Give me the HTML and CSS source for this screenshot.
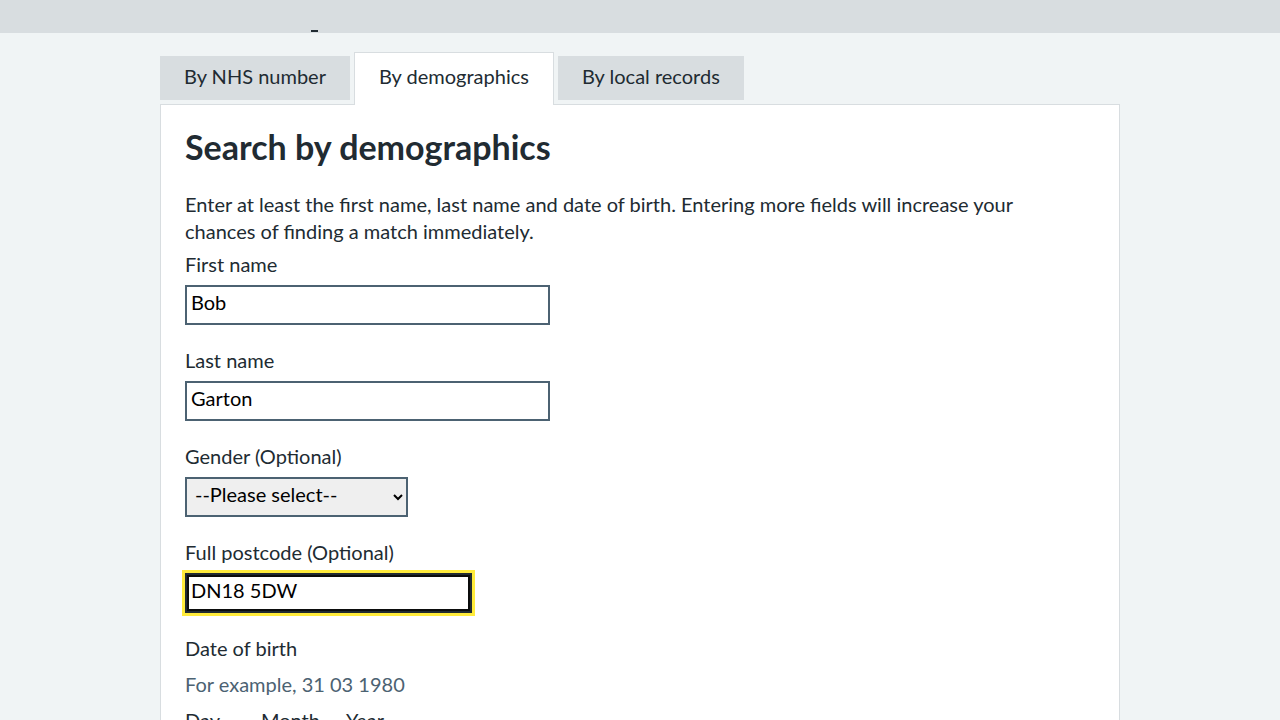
FILE: index.html
```html
<!DOCTYPE html>
<html lang="en">
<head>
<meta charset="utf-8">
<title>Search by demographics</title>
<link rel="stylesheet" href="styles.css">
</head>
<body>
<header class="topbar"></header>
<div class="page">
  <span class="descender" aria-hidden="true"></span>
  <ul class="tabs">
    <li class="tab">By NHS number</li>
    <li class="tab tab-active">By demographics</li>
    <li class="tab">By local records</li>
  </ul>
  <section class="panel">
    <h2 class="heading">Search by demographics</h2>
    <p class="intro">Enter at least the first name, last name and date of birth. Entering more fields will increase your chances of finding a match immediately.</p>
    <div class="group">
      <label class="label" for="fn">First name</label>
      <input class="input input-wide" id="fn" type="text" value="Bob">
    </div>
    <div class="group">
      <label class="label" for="ln">Last name</label>
      <input class="input input-wide" id="ln" type="text" value="Garton">
    </div>
    <div class="group">
      <label class="label" for="gender">Gender (Optional)</label>
      <select class="select" id="gender">
        <option>--Please select--</option>
        <option>Male</option>
        <option>Female</option>
      </select>
    </div>
    <div class="group">
      <label class="label" for="pc">Full postcode (Optional)</label>
      <input class="input input-mid input-focus" id="pc" type="text" value="DN18 5DW">
    </div>
    <div class="group">
      <div class="label">Date of birth</div>
      <div class="hint">For example, 31 03 1980</div>
      <div class="date-row">
        <span class="date-label date-day">Day</span>
        <span class="date-label date-month">Month</span>
        <span class="date-label">Year</span>
      </div>
    </div>
  </section>
</div>
</body>
</html>
```
FILE: styles.css
```css
html, body {
  margin: 0;
  padding: 0;
}
body {
  background: #f0f4f5;
  font-family: Lato, "Noto Sans", Arial, sans-serif;
  color: #212b32;
  font-size: 20px;
  line-height: 28px;
}
.topbar {
  height: 33px;
  background: #d8dde0;
}
.page {
  width: 960px;
  margin: 0 auto;
  padding-top: 19px;
  position: relative;
}
.descender {
  position: absolute;
  left: 151px;
  top: -3px;
  width: 7px;
  height: 2px;
  background: #212b32;
}
.tabs {
  list-style: none;
  margin: 0 0 -1px 0;
  padding: 0;
  display: flex;
  align-items: flex-start;
  gap: 4px;
}
.tab {
  margin-top: 4px;
  background: #d8dde0;
  padding: 6px 24px 10px;
  height: 28px;
}
.tab-active {
  margin-top: 0;
  background: #fff;
  border: 1px solid #d8dde0;
  border-bottom: 0;
  padding: 9px 24px 15px;
  position: relative;
  z-index: 1;
}
.panel {
  background: #fff;
  border: 1px solid #d8dde0;
  padding: 22px 24px 40px;
}
.heading {
  margin: 0 0 24px;
  font-size: 34px;
  line-height: 40px;
  font-weight: 700;
}
.intro {
  margin: 0 0 5px;
  line-height: 27px;
  max-width: 880px;
}
.group {
  margin-bottom: 21px;
}
.label {
  display: block;
  margin-bottom: 7px;
}
.input {
  display: block;
  box-sizing: border-box;
  height: 40px;
  border: 2px solid #4c6272;
  padding: 0 4px 7px;
  font-family: Lato, "Noto Sans", Arial, sans-serif;
  font-size: 20px;
  color: #000;
  background: #fff;
  margin: 0;
}
.input-wide {
  width: 365px;
}
.input-mid {
  width: 287px;
}
.input-focus {
  border-color: #212b32;
  box-shadow: inset 0 0 0 2px #0b0c0c;
  outline: 3px solid #ffeb3b;
  outline-offset: 0;
}
.select {
  display: block;
  box-sizing: border-box;
  width: 223px;
  height: 40px;
  border: 2px solid #4c6272;
  background: #efefef;
  padding: 0 4px 7px;
  font-family: Lato, "Noto Sans", Arial, sans-serif;
  font-size: 20px;
  color: #000;
  border-radius: 0;
  margin: 0;
}
.hint {
  color: #4c6272;
  margin: 8px 0 8px;
}
.date-row {
  display: flex;
}
.date-label {
  display: inline-block;
}
.date-day {
  width: 76px;
}
.date-month {
  width: 85px;
}
```
